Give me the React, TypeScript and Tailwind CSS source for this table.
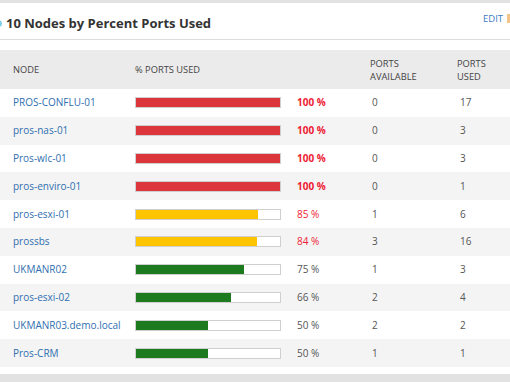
import React from "react";

type Row = { node: string; pct: number; avail: number; used: number };

const rows: Row[] = [
  { node: "PROS-CONFLU-01", pct: 100, avail: 0, used: 17 },
  { node: "pros-nas-01", pct: 100, avail: 0, used: 3 },
  { node: "Pros-wlc-01", pct: 100, avail: 0, used: 3 },
  { node: "pros-enviro-01", pct: 100, avail: 0, used: 1 },
  { node: "pros-esxi-01", pct: 85, avail: 1, used: 6 },
  { node: "prossbs", pct: 84, avail: 3, used: 16 },
  { node: "UKMANR02", pct: 75, avail: 1, used: 3 },
  { node: "pros-esxi-02", pct: 66, avail: 2, used: 4 },
  { node: "UKMANR03.demo.local", pct: 50, avail: 2, used: 2 },
  { node: "Pros-CRM", pct: 50, avail: 1, used: 1 },
];

function fillClass(p: number) {
  if (p >= 100) return "bg-[#dc363c]";
  if (p >= 80) return "bg-[#ffc400]";
  return "bg-[#1e7a1e]";
}

function pctClass(p: number) {
  if (p >= 100) return "text-[#ee1c34] font-bold";
  if (p >= 80) return "text-[#ee1c34]";
  return "text-[#555]";
}

export default function App() {
  return (
    <div
      className="w-[510px] h-[382px] overflow-hidden bg-[#e2e2e2] pt-[3px] pb-[8px]"
      style={{ fontFamily: '"Open Sans", "Liberation Sans", sans-serif' }}
    >
      <div className="relative bg-white h-full overflow-hidden">
        {/* title bar */}
        <div className="relative h-[37px] border-b border-[#dcdcdc] flex items-center pl-[6px]">
          <div className="absolute left-[-5px] top-[17px] w-[7px] h-[7px] rounded-full bg-[#7fd0e6]" />
          <h1 className="text-[13px] font-bold text-[#333] leading-none mt-[4px]">
            10 Nodes by Percent Ports Used
          </h1>
          <span className="absolute left-[483px] top-[11px] text-[9.5px] text-[#3b7cbf] leading-none">
            EDIT
          </span>
          <div className="absolute left-[507px] top-[11px] w-[6px] h-[9px] bg-[#f2c48a]" />
        </div>
        {/* table */}
        <div className="pt-[10px]">
          <div className="flex items-center h-[39px] bg-[#ebebeb] text-[9.3px] text-[#444] leading-[13px] pl-[13px]">
            <div className="w-[122px]">NODE</div>
            <div className="w-[235px]">% PORTS USED</div>
            <div className="w-[87px]">
              PORTS
              <br />
              AVAILABLE
            </div>
            <div>
              PORTS
              <br />
              USED
            </div>
          </div>
          {rows.map((r, i) => (
            <div
              key={r.node}
              className={`flex items-center h-[27.8px] pl-[13px] text-[10px] ${
                i % 2 === 1 ? "bg-[#f4f4f4]" : "bg-white"
              }`}
            >
              <div className="w-[122px] text-[#2f6fb0] whitespace-nowrap">{r.node}</div>
              <div className="w-[162px]">
                <div className="w-[146px] h-[11px] border border-[#cfcfcf] bg-white">
                  <div
                    className={`h-full ${fillClass(r.pct)}`}
                    style={{ width: `${r.pct}%` }}
                  />
                </div>
              </div>
              <div className={`w-[75px] ${pctClass(r.pct)}`}>{r.pct} %</div>
              <div className="w-[88px] text-[#555]">{r.avail}</div>
              <div className="text-[#555]">{r.used}</div>
            </div>
          ))}
        </div>
      </div>
    </div>
  );
}
